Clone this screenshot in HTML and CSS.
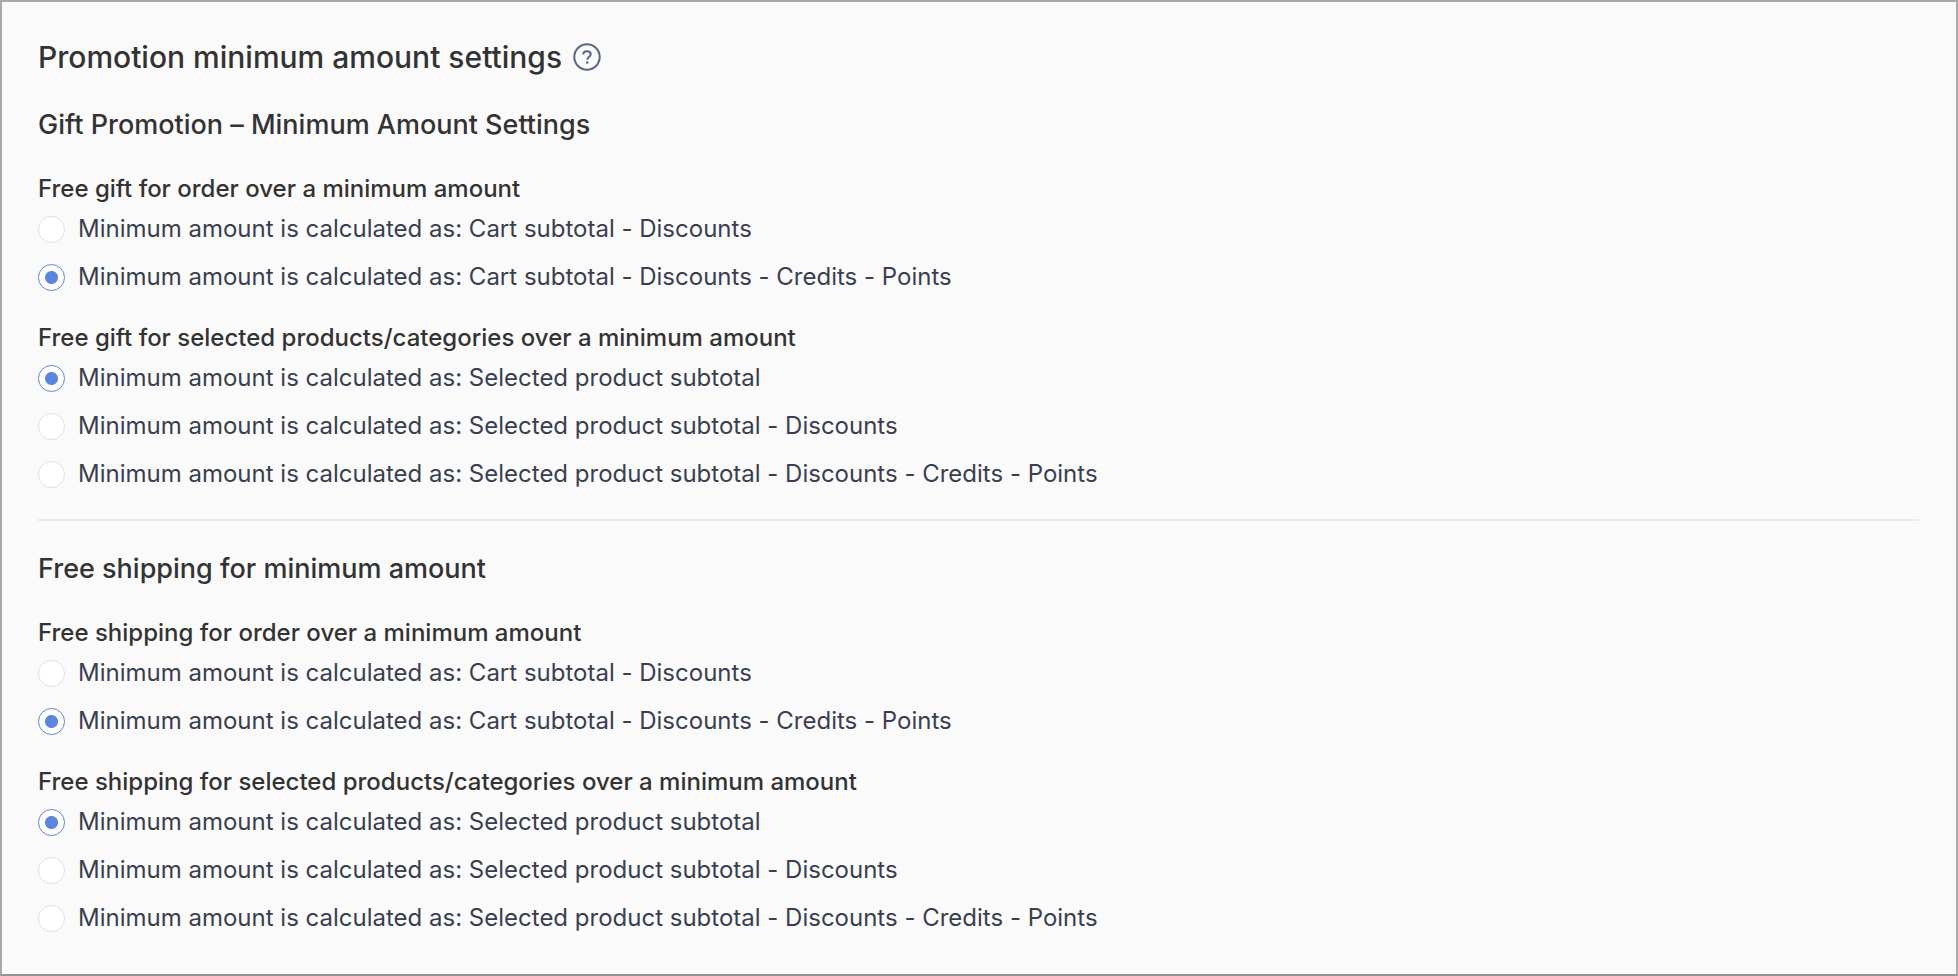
FILE: index.html
```
<!DOCTYPE html>
<html lang="en">
<head>
  <meta charset="UTF-8">
  <meta name="viewport" content="width=device-width, initial-scale=1.0">
  <title>Promotion minimum amount settings</title>
  <link rel="stylesheet" href="styles.css">
</head>
<body>
  <main class="settings">
    <header class="page-header">
      <h1>Promotion minimum amount settings</h1>
      <button type="button" class="help" aria-label="Help">
        <svg viewBox="0 0 28 28" width="28" height="28" fill="none" stroke="currentColor" stroke-width="2" stroke-linecap="butt" stroke-linejoin="round">
          <circle cx="14" cy="14" r="12.7"/>
          <path d="M10.300 11.600C10.300 9.400 11.800 8.300 14 8.300s3.700 1.200 3.700 3.100c0 2.400-3.400 2.500-3.400 5.300"/>
          <path d="M13 19.500h2.400" stroke-width="2.200"/>
        </svg>
      </button>
    </header>

    <section class="section">
      <h2>Gift Promotion – Minimum Amount Settings</h2>
      <fieldset>
        <legend>Free gift for order over a minimum amount</legend>
        <label><input type="radio" name="gift-order">Minimum amount is calculated as: Cart subtotal - Discounts</label>
        <label><input type="radio" name="gift-order" checked>Minimum amount is calculated as: Cart subtotal - Discounts - Credits - Points</label>
      </fieldset>
      <fieldset>
        <legend>Free gift for selected products/categories over a minimum amount</legend>
        <label><input type="radio" name="gift-product" checked>Minimum amount is calculated as: Selected product subtotal</label>
        <label><input type="radio" name="gift-product">Minimum amount is calculated as: Selected product subtotal - Discounts</label>
        <label><input type="radio" name="gift-product">Minimum amount is calculated as: Selected product subtotal - Discounts - Credits - Points</label>
      </fieldset>
    </section>

    <section class="section">
      <h2>Free shipping for minimum amount</h2>
      <fieldset>
        <legend>Free shipping for order over a minimum amount</legend>
        <label><input type="radio" name="shipping-order">Minimum amount is calculated as: Cart subtotal - Discounts</label>
        <label><input type="radio" name="shipping-order" checked>Minimum amount is calculated as: Cart subtotal - Discounts - Credits - Points</label>
      </fieldset>
      <fieldset>
        <legend>Free shipping for selected products/categories over a minimum amount</legend>
        <label><input type="radio" name="shipping-product" checked>Minimum amount is calculated as: Selected product subtotal</label>
        <label><input type="radio" name="shipping-product">Minimum amount is calculated as: Selected product subtotal - Discounts</label>
        <label><input type="radio" name="shipping-product">Minimum amount is calculated as: Selected product subtotal - Discounts - Credits - Points</label>
      </fieldset>
    </section>
  </main>
</body>
</html>
```

FILE: styles.css
```
* {
  box-sizing: border-box;
}
body {
  margin: 0;
  font-family: Inter, "Liberation Sans", sans-serif;
  font-size: 24px;
  font-variant-ligatures: no-contextual;
  color: #393f50;
  background-color: #fafafa;
}
.settings {
  min-height: 100vh;
  padding: 35px 37px 8px 36px;
  border: 2px solid #a9a9a9;
  border-bottom-color: #939393;
}
.page-header {
  display: flex;
  align-items: center;
  gap: 11px;
}
h1 {
  margin: 0;
  font-size: 30px;
  line-height: 40px;
  font-weight: 500;
  color: #333;
}
.help {
  display: flex;
  padding: 0;
  border: 0;
  background: none;
  color: #5b6587;
  cursor: pointer;
}
h2 {
  margin: 0 0 27px;
  font-size: 27px;
  line-height: 40px;
  font-weight: 500;
  color: #333;
}
.section {
  padding: 28px 0 21px;
}
.section + .section {
  border-top: 2px solid #e6eaee;
}
fieldset {
  margin: 0;
  padding: 0;
  border: 0;
}
fieldset + fieldset {
  margin-top: 20px;
}
legend {
  padding: 0;
  line-height: 33px;
  font-weight: 500;
  color: #333;
}
label {
  display: flex;
  align-items: center;
  gap: 13px;
  line-height: 48px;
}
input[type="radio"] {
  appearance: none;
  width: 27px;
  height: 27px;
  margin: 0;
  border: 1px solid #dce2e8;
  border-radius: 50%;
  background-color: #fff;
}
input[type="radio"]:checked {
  border-color: #5b86e0;
  background-image: radial-gradient(circle, #5b86e0 6px, transparent 7px);
}
```
